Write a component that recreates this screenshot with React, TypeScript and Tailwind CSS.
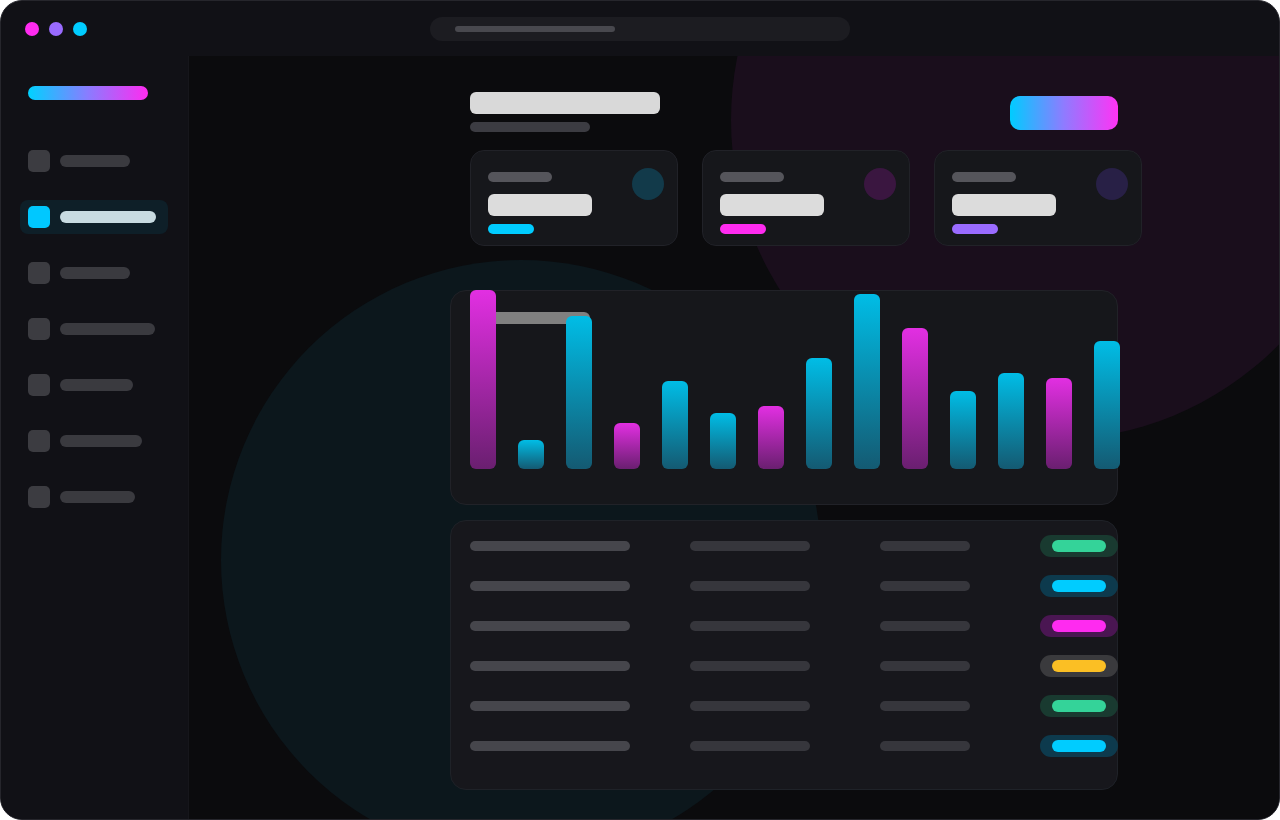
import React from "react";

const navItems = [
  { width: 70, active: false },
  { width: 96, active: true },
  { width: 70, active: false },
  { width: 95, active: false },
  { width: 73, active: false },
  { width: 82, active: false },
  { width: 75, active: false },
];

const stats = [
  { accent: "bg-[#00ccff]", dot: "bg-[#123a4a]" },
  { accent: "bg-[#ff2bf0]", dot: "bg-[#3a1640]" },
  { accent: "bg-[#9a6bff]", dot: "bg-[#282046]" },
];

// bar heights in px, every third bar is magenta
const bars = [179, 29, 153, 46, 88, 56, 63, 111, 175, 141, 78, 96, 91, 128];

const rows = [
  { pill: "bg-[#193a30]", dot: "bg-[#34d399]" },
  { pill: "bg-[#0d3a4d]", dot: "bg-[#00ccff]" },
  { pill: "bg-[#4a1652]", dot: "bg-[#ff2bf0]" },
  { pill: "bg-[#3a3a3d]", dot: "bg-[#fbbf24]" },
  { pill: "bg-[#193a30]", dot: "bg-[#34d399]" },
  { pill: "bg-[#0d3a4d]", dot: "bg-[#00ccff]" },
];

const Sidebar: React.FC = () => (
  <aside className="w-[188px] shrink-0 bg-[#111116] border-r border-[#16161b] pt-[30px]">
    <div className="ml-[27px] w-[120px] h-[14px] rounded-full bg-linear-to-r/srgb from-[#00d2ff] via-[#8a7cff] to-[#ff2bf0]" />
    <nav className="mt-[44px] flex flex-col gap-[22px]">
      {navItems.map((item, i) => (
        <div
          key={i}
          className={`mx-[19px] w-[148px] h-[34px] px-2 flex items-center gap-[10px] rounded-lg ${
            item.active ? "bg-[#0e1f28]" : ""
          }`}
        >
          <div
            className={`shrink-0 w-[22px] h-[22px] rounded-[5px] ${
              item.active ? "bg-[#00c8ff]" : "bg-[#3c3c41]"
            }`}
          />
          <div
            className={`h-[12px] rounded-full ${
              item.active ? "bg-[#c8dbe1]" : "bg-[#3a3a3f]"
            }`}
            style={{ width: item.width }}
          />
        </div>
      ))}
    </nav>
  </aside>
);

const StatCard: React.FC<{ accent: string; dot: string }> = ({ accent, dot }) => (
  <div className="relative shrink-0 w-[208px] h-[96px] rounded-[14px] bg-[#16171b] border border-[#212228] pl-[17px] pt-[21px]">
    <div className="w-[64px] h-[10px] rounded-full bg-[#55555b]" />
    <div className="mt-3 w-[104px] h-[22px] rounded-md bg-[#dcdcdc]" />
    <div className={`mt-2 w-[46px] h-[10px] rounded-full ${accent}`} />
    <div className={`absolute right-[13px] top-[17px] w-8 h-8 rounded-full ${dot}`} />
  </div>
);

const ChartCard: React.FC = () => (
  <div className="relative mt-[44px] h-[215px] rounded-2xl bg-[#16171b] border border-[#212228] pl-[19px] pt-[21px]">
    <div className="w-[120px] h-[12px] rounded-md bg-[#808080]" />
    <div className="absolute left-[19px] bottom-[35px] flex items-end gap-[22px]">
      {bars.map((h, i) => (
        <div
          key={i}
          className={`shrink-0 w-[26px] rounded-md bg-linear-to-b/srgb ${
            i % 3 === 0
              ? "from-[#e22fe2] to-[#6a1f70]"
              : "from-[#00bde6] to-[#145a72]"
          }`}
          style={{ height: h }}
        />
      ))}
    </div>
  </div>
);

const TableCard: React.FC = () => (
  <div className="mt-[15px] h-[270px] rounded-2xl bg-[#17171c] border border-[#1f2228] pl-[19px] pt-[14px] flex flex-col gap-[18px]">
    {rows.map((row, i) => (
      <div key={i} className="h-[22px] flex items-center">
        <div className="shrink-0 w-[160px] h-[10px] rounded-full bg-[#46464c]" />
        <div className="shrink-0 ml-[60px] w-[120px] h-[10px] rounded-full bg-[#36363c]" />
        <div className="shrink-0 ml-[70px] w-[90px] h-[10px] rounded-full bg-[#36363c]" />
        <div className={`shrink-0 ml-[70px] w-[78px] h-[22px] rounded-full flex items-center justify-center ${row.pill}`}>
          <div className={`w-[54px] h-[12px] rounded-full ${row.dot}`} />
        </div>
      </div>
    ))}
  </div>
);

export default function App() {
  return (
    <div className="w-[1280px] h-[820px] bg-white">
      <div className="w-full h-full rounded-[22px] overflow-hidden border border-[#26262c] bg-[#111116] flex flex-col">
        {/* Window bar */}
        <div className="h-[55px] shrink-0 flex items-center pl-[24px]">
          <div className="flex gap-[10px]">
            <span className="w-[14px] h-[14px] rounded-full bg-[#ff2bf0]" />
            <span className="w-[14px] h-[14px] rounded-full bg-[#9a6bff]" />
            <span className="w-[14px] h-[14px] rounded-full bg-[#00ccff]" />
          </div>
          <div className="ml-[343px] w-[420px] h-[24px] rounded-full bg-[#1c1c21] flex items-center pl-[25px]">
            <div className="w-[160px] h-[6px] rounded-full bg-[#48484e]" />
          </div>
        </div>

        <div className="flex flex-1 min-h-0">
          <Sidebar />

          <main className="relative flex-1 overflow-hidden bg-[#0b0b0d]">
            {/* Background glows */}
            <div className="absolute left-[542px] top-[-256px] w-[640px] h-[640px] rounded-full bg-[#1a0e1c]" />
            <div className="absolute left-[32px] top-[204px] w-[600px] h-[600px] rounded-full bg-[#0c171c]" />

            <div className="relative ml-[261px] w-[668px] pt-[36px]">
              {/* Header */}
              <div className="flex items-start justify-between pl-5">
                <div>
                  <div className="w-[190px] h-[22px] rounded-md bg-[#d9d9d9]" />
                  <div className="mt-2 w-[120px] h-[10px] rounded-full bg-[#3c3c42]" />
                </div>
                <div className="mt-1 w-[108px] h-[34px] rounded-[10px] bg-linear-to-r/srgb from-[#00ccff] via-[#8f7bff] to-[#ff33f5]" />
              </div>

              {/* Stats */}
              <div className="mt-[18px] pl-5 flex gap-6">
                {stats.map((s, i) => (
                  <StatCard key={i} accent={s.accent} dot={s.dot} />
                ))}
              </div>

              <ChartCard />
              <TableCard />
            </div>
          </main>
        </div>
      </div>
    </div>
  );
}
